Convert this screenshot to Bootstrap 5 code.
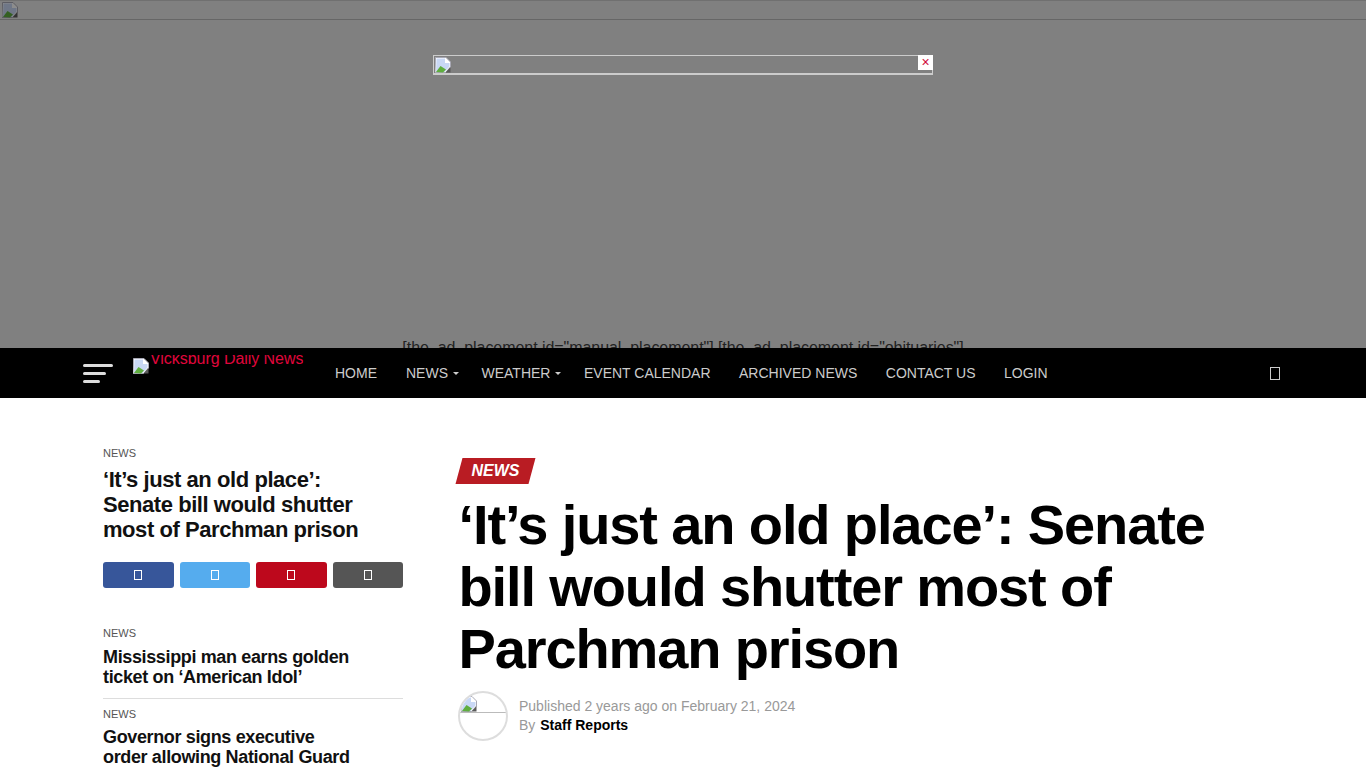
<!DOCTYPE html>
<html lang="en">
<head>
<meta charset="utf-8">
<title>Vicksburg Daily News</title>
<link href="https://cdn.jsdelivr.net/npm/bootstrap@5.3.0/dist/css/bootstrap.min.css" rel="stylesheet">
<style>
html,body{height:768px;overflow:hidden}
body{font-family:"Liberation Sans",Arial,sans-serif;color:#000;background:#fff}
.ad-shade{height:348px;background:#808080;overflow:hidden;position:relative}
.ad-strip{height:20px;border-top:1px solid #707070;border-bottom:1px solid #666;padding:1px 0 0 2px}
.ad-strip .bad-img{filter:brightness(.55)}
.ad-box{width:500px;height:20px;margin:35px auto 0;border:1px solid #ccc;border-bottom-width:2px;position:relative;padding:1px}
.ad-close{position:absolute;right:-1px;top:-1px;width:15px;height:15px;background:#fff;color:#d00a3c;font-size:14px;line-height:15px;text-align:center}
.shortcode{position:absolute;left:0;right:0;top:338px;text-align:center;font-size:16px;line-height:20px;color:#222;white-space:nowrap;letter-spacing:-.054px}
.bad-img{width:16px;height:16px;display:block;flex:none}
.site-bar{height:50px;background:#000}
.burger{width:30px;margin-left:83px;margin-right:20px}
.burger i{display:block;height:3px;background:#ddd;border-radius:2px;margin-bottom:5px}
.burger i:nth-child(2){width:23px}.burger i:nth-child(3){width:17px;margin-bottom:0}
.logo-wrap{width:202px;height:50px;overflow:hidden;position:relative}
.logo-wrap .bad-img{position:absolute;left:0;top:10px}
.logo-alt{position:absolute;left:17px;top:1px;font-size:16px;line-height:20px;color:#e0063c;white-space:nowrap;letter-spacing:-.05px;clip-path:inset(6px 0 0 0)}
.menu-link{font-size:14px;color:#ccc;text-decoration:none;text-transform:uppercase;margin-right:28.5px;line-height:50px;position:relative;white-space:nowrap}
.menu-link.first-link{margin-right:29px}
.menu-link.has-sub{margin-right:33.5px}
.menu-link.has-sub::after{content:"";position:absolute;right:-11px;top:24px;border:3px solid transparent;border-top-color:#ccc;border-bottom:0}
.tofu{display:inline-block;width:10px;height:13px;border:1px solid #ccc}
.search-tofu{margin-left:auto;margin-right:86px;line-height:0}
.page-body{padding:48px 0 0 103px}
.side-col{width:300px;flex:none;margin-right:55.5px}
.kicker{font-size:11px;line-height:14px;color:#555;text-transform:uppercase}
.side-lead{font-size:22px;font-weight:700;line-height:25px;letter-spacing:-.02em;margin:7px 35px 20px 0;color:#111}
.share-row{gap:6px}
.share-btn{flex:1 1 0;height:26px;border-radius:3px;display:flex;align-items:center;justify-content:center}
.share-btn .tofu{width:8px;height:10px;border-color:#fff}
.bg-fb{background:#37569a}.bg-tw{background:#55acee}.bg-pin{background:#bd081c}.bg-mail{background:#555}
.side-list{margin-top:38px}
.side-item{border-bottom:1px solid #ddd;padding-bottom:11px;margin-bottom:8px}
.side-item:last-child{border-bottom:0}
.side-title{font-size:18px;font-weight:700;line-height:20px;letter-spacing:-.02em;margin:7px 45px 0 0;color:#111}
.side-item:last-child .side-title{margin-top:6px}
.main-col{width:780px;flex:none}
.cat-tag{display:inline-block;background:#b91c23;color:#fff;font-size:16px;font-weight:700;font-style:italic;line-height:26px;width:73px;text-align:center;transform:skewX(-15deg);margin-top:12px}
.cat-tag span{display:block;transform:skewX(15deg)}
.big-title{font-size:56px;font-weight:700;line-height:62px;letter-spacing:-.02em;margin:10px 0 11px;color:#000}
.avatar{width:50px;height:50px;border:2px solid #ddd;border-radius:50%;overflow:hidden;position:relative;flex:none;margin:0 11px 0 -.5px}
.avatar::after{content:"";position:absolute;left:0;right:0;top:19px;border-top:1px solid #bbb}
.avatar .bad-img{margin:3px 0 0 1px}
.byline{font-size:14px;line-height:19.5px;color:#999}
.byline b{color:#000;margin-left:1px}
</style>
</head>
<body>
<svg width="0" height="0" class="position-absolute">
<symbol id="broken" viewBox="0 0 16 16">
<path d="M.5 .5h10.500l4.500 4.500v5l-5 5.500h-10.500z" fill="#fff" stroke="#a8a8b4"/>
<path d="M1.500 1.500h8.500v4.500h4.500v3.500l-5 5.500h-8.500z" fill="#c9d8f5"/>
<path d="M1 15l4.500-6 5.500 3.500-3 3z" fill="#5fae3e"/>
<path d="M10.500 15.500l5-5.500v5.500z" fill="#5a5a5a"/>
</symbol>
</svg>
<div class="ad-shade">
  <div class="ad-strip"><svg class="bad-img"><use href="#broken"/></svg></div>
  <div class="ad-box"><svg class="bad-img"><use href="#broken"/></svg><span class="ad-close">×</span></div>
  <div class="shortcode">[the_ad_placement id="manual_placement"] [the_ad_placement id="obituaries"]</div>
</div>
<nav class="site-bar d-flex align-items-center">
  <div class="burger"><i></i><i></i><i></i></div>
  <div class="logo-wrap"><svg class="bad-img"><use href="#broken"/></svg><span class="logo-alt">Vicksburg Daily News</span></div>
  <a class="menu-link first-link" href="#">Home</a>
  <a class="menu-link has-sub" href="#">News</a>
  <a class="menu-link has-sub" href="#">Weather</a>
  <a class="menu-link" href="#">Event Calendar</a>
  <a class="menu-link" href="#">Archived News</a>
  <a class="menu-link" href="#">Contact Us</a>
  <a class="menu-link" href="#">Login</a>
  <span class="search-tofu"><span class="tofu"></span></span>
</nav>
<div class="page-body d-flex">
  <aside class="side-col">
    <div class="kicker">News</div>
    <h3 class="side-lead">‘It’s just an old place’: Senate bill would shutter most of Parchman prison</h3>
    <div class="d-flex share-row">
      <div class="share-btn bg-fb"><span class="tofu"></span></div>
      <div class="share-btn bg-tw"><span class="tofu"></span></div>
      <div class="share-btn bg-pin"><span class="tofu"></span></div>
      <div class="share-btn bg-mail"><span class="tofu"></span></div>
    </div>
    <div class="side-list">
      <div class="side-item"><div class="kicker">News</div><h4 class="side-title">Mississippi man earns golden ticket on ‘American Idol’</h4></div>
      <div class="side-item"><div class="kicker">News</div><h4 class="side-title">Governor signs executive order allowing National Guard</h4></div>
    </div>
  </aside>
  <main class="main-col">
    <span class="cat-tag"><span>NEWS</span></span>
    <h1 class="big-title">‘It’s just an old place’: Senate bill would shutter most of Parchman prison</h1>
    <div class="d-flex align-items-center">
      <div class="avatar"><svg class="bad-img"><use href="#broken"/></svg></div>
      <div class="byline">Published 2 years ago on February 21, 2024<br>By <b>Staff Reports</b></div>
    </div>
  </main>
</div>
</body>
</html>
